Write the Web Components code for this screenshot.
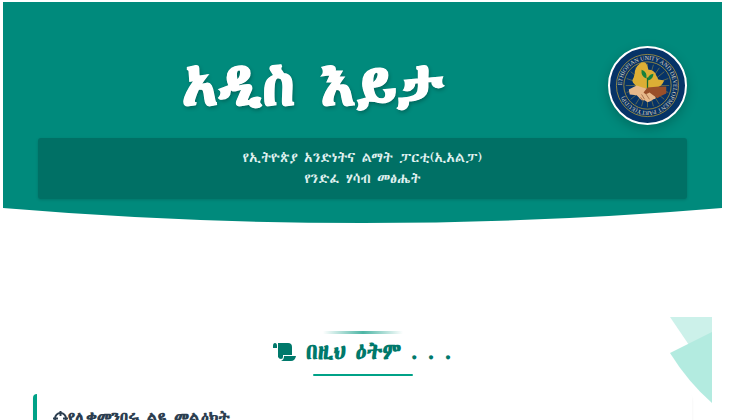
<!DOCTYPE html>
<html lang="am">
<head>
<meta charset="utf-8">
<meta name="viewport" content="width=device-width, initial-scale=1">
<title>አዲስ እይታ</title>
<style>
html, body { overflow: hidden; }
body { margin: 2px 8px 0 3px; background: #fff; font-family: "Abyssinica SIL", "Noto Serif Ethiopic", serif; }
</style>
</head>
<body>
<magazine-header>
  <span slot="title">አዲስ እይታ</span>
  <party-emblem slot="logo"></party-emblem>
  <span slot="line1">የኢትዮጵያ አንድነትና ልማት ፓርቲ(ኢአልፓ)</span>
  <span slot="line2">የንድፈ ሃሳብ መፅሔት</span>
</magazine-header>
<issue-contents>
  <span slot="heading">በዚህ ዕትም . . .</span>
  <article-card>የሊቀመንበሩ ልዩ መልዕክት</article-card>
</issue-contents>
<script>
const define = (name, html) => customElements.define(name, class extends HTMLElement {
  constructor() {
    super();
    this.attachShadow({ mode: 'open' }).innerHTML = html;
  }
});

define('party-emblem', `
<style>
:host { display: block; box-sizing: border-box; width: 79px; height: 79px; border: 2px solid #fff; border-radius: 50%; background: #063367; box-shadow: 0 4px 12px rgba(0,0,0,.22); }
svg { display: block; width: 100%; height: 100%; }
text { font: 6px "Liberation Serif", serif; fill: #e0dbc0; }
</style>
<svg viewBox="0 0 76 76" role="img" aria-label="EUDP">
  <g fill="none" stroke="#b09a3c" stroke-width=".8"><circle cx="38" cy="38" r="31.500"/><circle cx="38" cy="38" r="24"/></g>
  <g stroke="#b09a3c" stroke-width=".5"><path d="M38 38V16M38 38L44 17M38 38L50 20M38 38L55 24M38 38L59 31M38 38L60 38M38 38L59 45M38 38L55 52M38 38L50 57M38 38L44 59M38 38V60M38 38L32 59M38 38L26 57M38 38L21 52M38 38L17 45M38 38H16M38 38L17 31M38 38L21 24M38 38L26 20M38 38L32 17"/></g>
  <path id="ring" fill="none" d="M12 38a26 26 0 0 1 52 0a26 26 0 0 1 -52 0"/>
  <text><textPath href="#ring">ETHIOPIAN UNITY AND DEVELOPMENT PARTY(EUDP)</textPath></text>
  <path fill="#dcae35" d="M30 16q4-3 7 0l2 6q6 0 8 6l2 4 6 1q-3 7-10 8H29l-4-4q-4-3-1-7l1-4q0-6 5-10z"/>
  <path fill="none" stroke="#17682c" stroke-width="1.300" d="M38 43V30"/>
  <path fill="#17803b" d="M37 31q-6-2-5-9 6 2 5 9zM38 33q0-6 6-7 0 6-6 7z"/>
  <path fill="#e8b98a" d="M19 42l8-4 6 2 8 2 5 7q1 3-2 3l-3 2-3 1-3-2-3 0-5-5-7-1z"/>
  <path fill="#994f29" d="M57 39l-7 0-12 1-4 5q2 3 6 0l8 6 3-2 6-3z"/>
  <path fill="none" stroke="#7d4527" stroke-width=".6" d="M32 47l3 5M36 46l4 6M31 50l2 3"/>
</svg>`);

define('magazine-header', `
<style>
:host { display: block; color: #fff; }
header { background: #008a7c; padding: 44px 35px 9px; }
.top { display: flex; align-items: center; gap: 20px; }
h1 { flex: 1; margin: 0; text-align: center; font-size: 58px; line-height: 79px; font-weight: 700; -webkit-text-stroke: 1px #fff; text-shadow: 1px 2px 4px rgba(0,0,0,.3); }
.sub { margin-top: 13px; padding: 9px 16px 10px; border-radius: 3px; background: #007065; color: #e0f2f1; text-align: center; font-size: 14px; line-height: 21px; box-shadow: 0 1px 3px rgba(0,0,0,.15); }
.sub slot { display: block; }
svg { display: block; width: 100%; height: 15px; }
</style>
<header>
  <div class="top"><h1><slot name="title"></slot></h1><slot name="logo"></slot></div>
  <div class="sub"><slot name="line1"></slot><slot name="line2"></slot></div>
</header>
<svg viewBox="0 0 100 15" preserveAspectRatio="none" aria-hidden="true"><path fill="#008a7c" d="M0 0Q50 30 100 0z"/></svg>`);

define('issue-contents', `
<style>
:host { display: block; position: relative; margin: 94px 10px 0; padding: 14px 20px 0; }
.accent { width: 80px; height: 3px; margin: 0 auto; background: linear-gradient(90deg, transparent, #4db6a5, transparent); }
h2 { display: flex; align-items: center; justify-content: center; gap: 10px; margin: 2px 0 0; color: #00796b; font-size: 22px; line-height: 32px; }
h2 svg { width: 23px; height: 18px; }
.rule { width: 100px; height: 2px; margin: 6px auto 18px; border-radius: 1px; background: #00a287; }
.leaf { position: absolute; top: 0; right: 0; width: 42px; height: 86px; }
</style>
<svg class="leaf" viewBox="0 0 42 86" aria-hidden="true"><path fill="#ccf1ea" d="M0 0h42v16L19 28z"/><path fill="#b3ebe0" d="M42 15v71Q18 65 0 36z"/></svg>
<div class="accent"></div>
<h2><svg viewBox="0 0 23 18" aria-hidden="true" fill="currentColor"><path d="M2 0Q4 0 4 3V5H0V3Q0 0 2 0zM5 0H15Q19 0 19 4V12H10V14Q10 16 8 16T5 14zM11 13H23Q22 18 18 18H8Q11 17 11 13z"/></svg><slot name="heading"></slot></h2>
<div class="rule"></div>
<slot></slot>`);

define('article-card', `
<style>
:host { display: block; border-left: 4px solid #00a287; border-radius: 4px; box-shadow: 0 2px 3px rgba(0,0,0,.06); padding: 12px 16px 20px; }
h3 { display: flex; align-items: center; margin: 0; color: #2c3e50; font-size: 16px; line-height: 24px; font-weight: 700; }
svg { width: 15px; height: 15px; }
</style>
<h3><svg viewBox="0 0 15 15" aria-hidden="true" fill="none" stroke="currentColor" stroke-width="2"><circle cx="7.500" cy="7.500" r="5.500"/><path d="M7.500 0v5M7.500 10v5M0 7.500h5M10 7.500h5"/></svg><slot></slot></h3>`);
</script>
</body>
</html>
